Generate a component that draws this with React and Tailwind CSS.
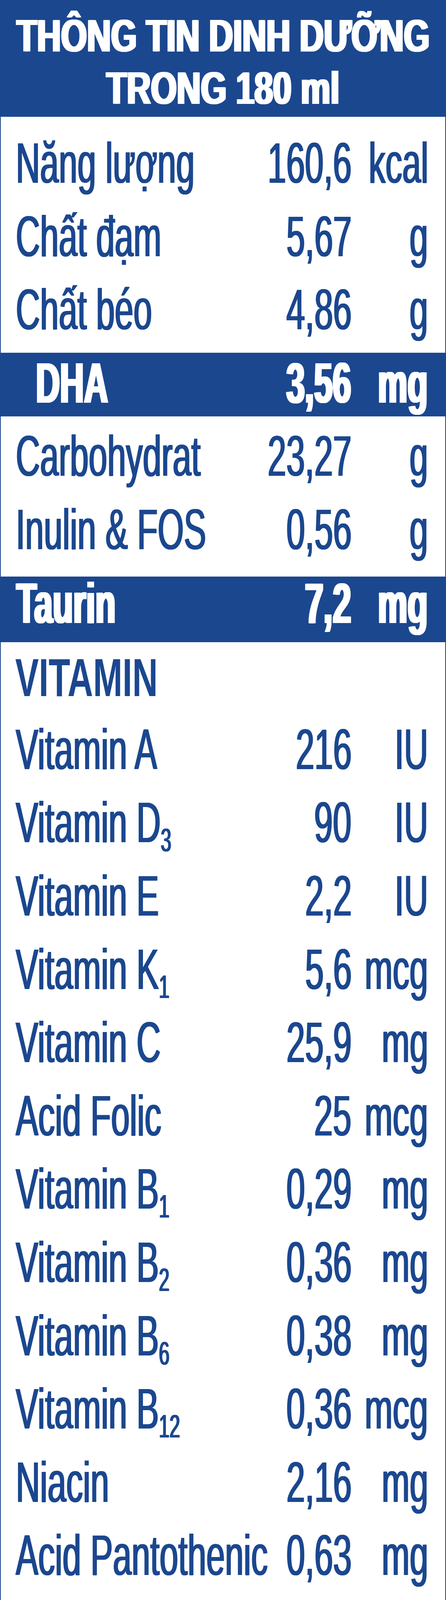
import React from "react";

const BLUE = "text-[#1b478f]";
const THIN = "[text-shadow:2.5px_0_0_currentColor,5px_0_0_currentColor]";
const HEAVY =
  "[text-shadow:3.5px_0_0_currentColor,7px_0_0_currentColor,10px_0_0_currentColor]";
const TITLE = "[text-shadow:4px_0_0_currentColor,8px_0_0_currentColor]";

function Sub({ children }) {
  return <span className="text-[83px] leading-none align-[-23px]">{children}</span>;
}

function Row({ label, value, unit }) {
  return (
    <div className={`flex h-[187.6px] pl-[37px] pr-[45px] text-[147px] leading-[187.6px] ${BLUE} ${THIN}`}>
      <div className="flex min-w-0 flex-1">
        <span className="shrink-0 origin-left scale-x-[0.585] whitespace-nowrap">{label}</span>
      </div>
      <div className="flex w-[400px] justify-end">
        <span className="shrink-0 origin-right scale-x-[0.585] whitespace-nowrap">{value}</span>
      </div>
      <div className="flex w-[196px] justify-end">
        <span className="shrink-0 origin-right scale-x-[0.585] whitespace-nowrap">{unit}</span>
      </div>
    </div>
  );
}

function Band({ label, value, unit, h, lh, mt, indent }) {
  return (
    <div
      className={`flex bg-[#1b478f] pl-[37px] pr-[48px] text-[147px] font-bold text-white ${HEAVY} ${h} ${lh} ${mt}`}
    >
      <div className={`flex min-w-0 flex-1 ${indent || ""}`}>
        <span className="shrink-0 origin-left scale-x-[0.58] whitespace-nowrap">{label}</span>
      </div>
      <div className="flex w-[400px] justify-end">
        <span className="shrink-0 origin-right scale-x-[0.58] whitespace-nowrap">{value}</span>
      </div>
      <div className="flex w-[196px] justify-end">
        <span className="shrink-0 origin-right scale-x-[0.58] whitespace-nowrap">{unit}</span>
      </div>
    </div>
  );
}

function Heading({ children, h, lh }) {
  return (
    <div className={`flex pl-[37px] text-[137px] font-bold ${BLUE} ${h} ${lh}`}>
      <span className="shrink-0 origin-left scale-x-[0.66] whitespace-nowrap">{children}</span>
    </div>
  );
}

export default function App() {
  return (
    <div className="w-[1142px] bg-white font-['Liberation_Sans',Arial,sans-serif]">
      <div className="h-[6969px] overflow-hidden border-x-2 border-b-[3px] border-[#1b478f]">
        {/* Header */}
        <div
          className={`h-[298.5px] bg-[#1b478f] pr-[6px] pt-[25px] text-[116px] font-bold leading-[134px] text-white ${TITLE}`}
        >
          <div className="flex justify-center">
            <span className="shrink-0 scale-x-[0.735] whitespace-nowrap">THÔNG TIN DINH DƯỠNG</span>
          </div>
          <div className="flex justify-center">
            <span className="shrink-0 scale-x-[0.735] whitespace-nowrap">TRONG 180 ml</span>
          </div>
        </div>

        <div className="pt-[25.6px]">
          <Row label="Năng lượng" value="160,6" unit="kcal" />
          <Row label="Chất đạm" value="5,67" unit="g" />
          <Row label="Chất béo" value="4,86" unit="g" />
        </div>

        <Band
          label="DHA"
          value="3,56"
          unit="mg"
          h="h-[163px]"
          lh="leading-[154.6px]"
          mt="mt-[16.5px]"
          indent="pl-[50px]"
        />

        <div className="pt-[7.9px]">
          <Row label="Carbohydrat" value="23,27" unit="g" />
          <Row label="Inulin & FOS" value="0,56" unit="g" />
        </div>

        <Band
          label="Taurin"
          value="7,2"
          unit="mg"
          h="h-[168.3px]"
          lh="leading-[137.8px]"
          mt="mt-[26.2px]"
        />

        <Heading h="h-[180.9px]" lh="leading-[181px]">VITAMIN</Heading>

        <div>
          <Row label="Vitamin A" value="216" unit="IU" />
          <Row label={<>Vitamin D<Sub>3</Sub></>} value="90" unit="IU" />
          <Row label="Vitamin E" value="2,2" unit="IU" />
          <Row label={<>Vitamin K<Sub>1</Sub></>} value="5,6" unit="mcg" />
          <Row label="Vitamin C" value="25,9" unit="mg" />
          <Row label="Acid Folic" value="25" unit="mcg" />
          <Row label={<>Vitamin B<Sub>1</Sub></>} value="0,29" unit="mg" />
          <Row label={<>Vitamin B<Sub>2</Sub></>} value="0,36" unit="mg" />
          <Row label={<>Vitamin B<Sub>6</Sub></>} value="0,38" unit="mg" />
          <Row label={<>Vitamin B<Sub>12</Sub></>} value="0,36" unit="mcg" />
          <Row label="Niacin" value="2,16" unit="mg" />
          <Row label="Acid Pantothenic" value="0,63" unit="mg" />
          <Row label="Biotin" value="4,5" unit="mcg" />
        </div>

        <Band
          label="Cholin"
          value="36"
          unit="mg"
          h="h-[156.9px]"
          lh="leading-[144.6px]"
          mt="mt-[22.1px]"
        />

        <Heading h="h-[197.3px]" lh="leading-[211.2px]">KHOÁNG CHẤT</Heading>

        <div>
          <Row label="Natri" value="61" unit="mg" />
          <Row label="Kali" value="257" unit="mg" />
          <Row label="Clo" value="148" unit="mg" />
        </div>

        <Band
          label="Canxi"
          value="275"
          unit="mg"
          h="h-[162.3px]"
          lh="leading-[143.8px]"
          mt="mt-[21.4px]"
        />

        <div className="pt-[3.4px]">
          <Row label="Phốt pho" value="153" unit="mg" />
          <Row label="Magiê" value="18,0" unit="mg" />
          <Row label="Sắt" value="2,25" unit="mg" />
          <Row label="Kẽm" value="1,80" unit="mg" />
          <Row label="Mangan" value="243" unit="mcg" />
          <Row label="Đồng" value="0,18" unit="mg" />
          <Row label="I ốt" value="11,3" unit="mcg" />
          <Row label="Selen" value="4,5" unit="mcg" />
        </div>
      </div>
    </div>
  );
}
